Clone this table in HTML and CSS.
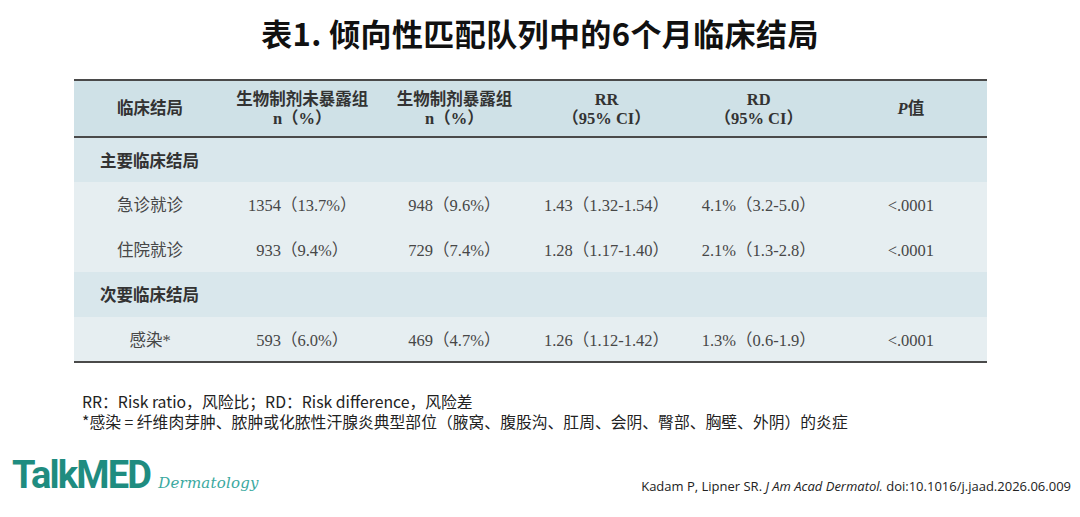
FILE: index.html
```html
<!DOCTYPE html>
<html lang="zh">
<head>
<meta charset="utf-8">
<link rel="stylesheet" href="styles.css">
</head>
<body>
<div class="page">
  <h1 class="title">表1. 倾向性匹配队列中的6个月临床结局</h1>
  <table class="outcomes">
    <colgroup>
      <col class="c"><col class="c"><col class="c"><col class="c"><col class="c"><col class="c">
    </colgroup>
    <thead>
      <tr>
        <th>临床结局</th>
        <th>生物制剂未暴露组<br>n（%）</th>
        <th>生物制剂暴露组<br>n（%）</th>
        <th>RR<br>（95% CI）</th>
        <th>RD<br>（95% CI）</th>
        <th><i class="p">P</i>值</th>
      </tr>
    </thead>
    <tbody>
      <tr class="section"><td colspan="6">主要临床结局</td></tr>
      <tr class="data"><td>急诊就诊</td><td>1354（13.7%）</td><td>948（9.6%）</td><td>1.43（1.32-1.54）</td><td>4.1%（3.2-5.0）</td><td>&lt;.0001</td></tr>
      <tr class="data"><td>住院就诊</td><td>933（9.4%）</td><td>729（7.4%）</td><td>1.28（1.17-1.40）</td><td>2.1%（1.3-2.8）</td><td>&lt;.0001</td></tr>
      <tr class="section"><td colspan="6">次要临床结局</td></tr>
      <tr class="data"><td>感染*</td><td>593（6.0%）</td><td>469（4.7%）</td><td>1.26（1.12-1.42）</td><td>1.3%（0.6-1.9）</td><td>&lt;.0001</td></tr>
    </tbody>
  </table>
  <div class="notes">
    <p>RR：Risk ratio，风险比；RD：Risk difference，风险差</p>
    <p>*感染 = 纤维肉芽肿、脓肿或化脓性汗腺炎典型部位（腋窝、腹股沟、肛周、会阴、臀部、胸壁、外阴）的炎症</p>
  </div>
  <div class="footer">
    <div class="logo"><span class="brand">TalkMED</span><span class="sub">Dermatology</span></div>
    <div class="cite">Kadam P, Lipner SR. <i>J Am Acad Dermatol.</i> doi:10.1016/j.jaad.2026.06.009</div>
  </div>
</div>
</body>
</html>
```

FILE: styles.css
```css
html, body {
  margin: 0;
  padding: 0;
  background: #ffffff;
}
.page {
  width: 1080px;
  height: 517px;
  display: flex;
  flex-direction: column;
  font-family: "Noto Sans CJK SC", "Noto Sans", sans-serif;
}
.title {
  margin: 0;
  padding-top: 13px;
  height: 39px;
  font-size: 31px;
  line-height: 39px;
  font-weight: 700;
  text-align: center;
  color: #111;
  letter-spacing: 0.4px;
}
.outcomes {
  margin: 27px 0 0 74px;
  width: 913px;
  border-collapse: collapse;
  table-layout: fixed;
  font-family: "Liberation Serif", "Noto Sans CJK SC", serif;
  font-size: 16.5px;
  line-height: 20px;
  border-top: 2px solid #4a4a4a;
  border-bottom: 2px solid #4a4a4a;
}
.outcomes th {
  background: #cfe1e7;
  color: #333;
  font-weight: 700;
  height: 55px;
  padding: 0;
  line-height: 19px;
  border-bottom: 2px solid #4a4a4a;
  text-align: center;
  vertical-align: middle;
}
.outcomes .p {
  font-style: italic;
}
.outcomes tbody tr {
  height: 45px;
}
.outcomes td {
  padding: 3px 0 0 0;
  text-align: center;
  vertical-align: middle;
}
.section td {
  background: #d9e7ec;
  color: #333;
  font-weight: 700;
  text-align: left;
  padding-left: 26px;
}
.data td {
  background: #e6eef1;
  color: #474747;
}
.notes {
  margin: 29px 0 0 82px;
  font-size: 15.8px;
  line-height: 20px;
  color: #222;
}
.notes p {
  margin: 0;
}
.footer {
  margin-top: 23px;
  display: flex;
  justify-content: space-between;
  align-items: flex-end;
  padding: 0 9px 0 12px;
}
.logo {
  display: flex;
  align-items: baseline;
  gap: 8px;
}
.brand {
  font-family: Roboto, "Noto Sans", sans-serif;
  font-weight: 700;
  font-size: 38px;
  line-height: 40px;
  letter-spacing: -1.8px;
  color: #1f8c80;
}
.sub {
  font-family: "DejaVu Serif", serif;
  font-style: italic;
  font-size: 15px;
  color: #3aa9a0;
  letter-spacing: 0.2px;
}
.cite {
  font-family: "Open Sans", "Noto Sans", sans-serif;
  font-size: 13px;
  color: #222;
  padding-bottom: 0;
}
```
